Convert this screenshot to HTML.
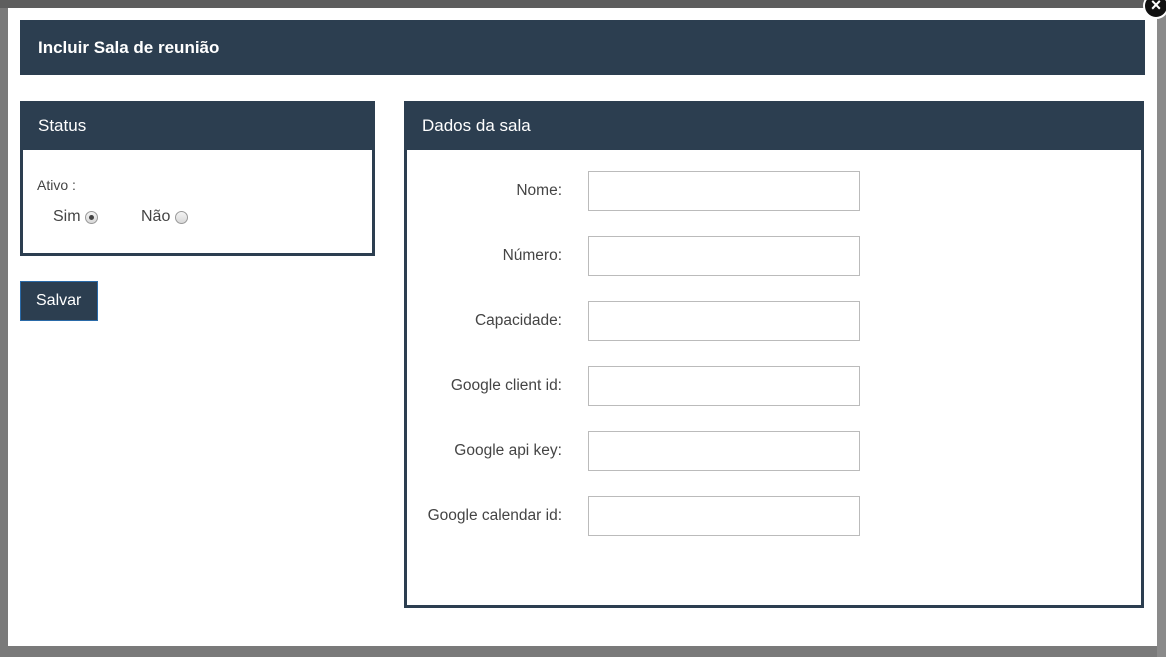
<!DOCTYPE html>
<html><head><meta charset="utf-8"><style>
*{box-sizing:border-box;margin:0;padding:0}
body{width:1166px;height:657px;background:#7a7a7a;font-family:"Liberation Sans",sans-serif;position:relative;overflow:hidden}
.bgtop{position:absolute;left:0;top:0;width:1166px;height:8px;background:#5e5e5e}
.bgr{position:absolute;left:1157px;top:8px;width:9px;height:649px;background:#8a8a8a}
.modal{position:absolute;left:8px;top:8px;width:1149px;height:638px;background:#fff}
.hdr{position:absolute;left:20px;top:20px;width:1125px;height:55px;background:#2c3e50;color:#fff;font-weight:bold;font-size:17px;padding:18px 0 0 18px}
.panel{position:absolute;border:3px solid #2c3e50;background:#fff}
.ph{background:#2c3e50;color:#fff;font-size:17px;height:49px;padding:15px 0 0 18px;margin:-3px -3px 0 -3px}
.lbl{position:absolute;font-size:15.5px;color:#444;text-align:right;width:200px}
.inp{position:absolute;left:588px;width:272px;height:40px;border:1px solid #bbb;background:#fff}
.radio{display:inline-block;width:13px;height:13px;border:1px solid #999;border-radius:50%;background:linear-gradient(#f4f4f4,#d8d8d8);vertical-align:-3px;position:relative}
.radio.on::after{content:"";position:absolute;left:3px;top:3px;width:5px;height:5px;border-radius:50%;background:#444}
.btn{position:absolute;left:20px;top:281px;width:78px;height:40px;background:#2c3e50;border:1px solid #2a6aa8;color:#fff;font-size:16px;padding:10px 0 0 15px}
.close{position:absolute;left:1143px;top:-7px;width:26px;height:26px;border-radius:50%;background:#111;border:2px solid #fff;color:#fff;font-size:18px;font-weight:bold;text-align:center;line-height:21px}
</style></head><body>
<div class="bgtop"></div>
<div class="bgr"></div>
<div class="modal"></div>
<div class="hdr">Incluir Sala de reunião</div>
<div class="panel" style="left:20px;top:101px;width:355px;height:155px">
<div class="ph">Status</div>
<div style="position:absolute;left:14px;top:73px;font-size:14px;color:#444">Ativo :</div>
<div style="position:absolute;left:30px;top:104px;font-size:16px;color:#444">Sim <span class="radio on"></span></div>
<div style="position:absolute;left:118px;top:104px;font-size:16px;color:#444">Não <span class="radio"></span></div>
</div>
<div class="btn">Salvar</div>
<div class="panel" style="left:404px;top:101px;width:740px;height:507px">
<div class="ph">Dados da sala</div>
</div>
<div class="lbl" style="left:362px;top:182px">Nome:</div>
<div class="lbl" style="left:362px;top:247px">Número:</div>
<div class="lbl" style="left:362px;top:312px">Capacidade:</div>
<div class="lbl" style="left:362px;top:377px">Google client id:</div>
<div class="lbl" style="left:362px;top:442px">Google api key:</div>
<div class="lbl" style="left:362px;top:507px">Google calendar id:</div>
<div class="inp" style="top:171px"></div>
<div class="inp" style="top:236px"></div>
<div class="inp" style="top:301px"></div>
<div class="inp" style="top:366px"></div>
<div class="inp" style="top:431px"></div>
<div class="inp" style="top:496px"></div>
<div class="close">×</div>
</body></html>
